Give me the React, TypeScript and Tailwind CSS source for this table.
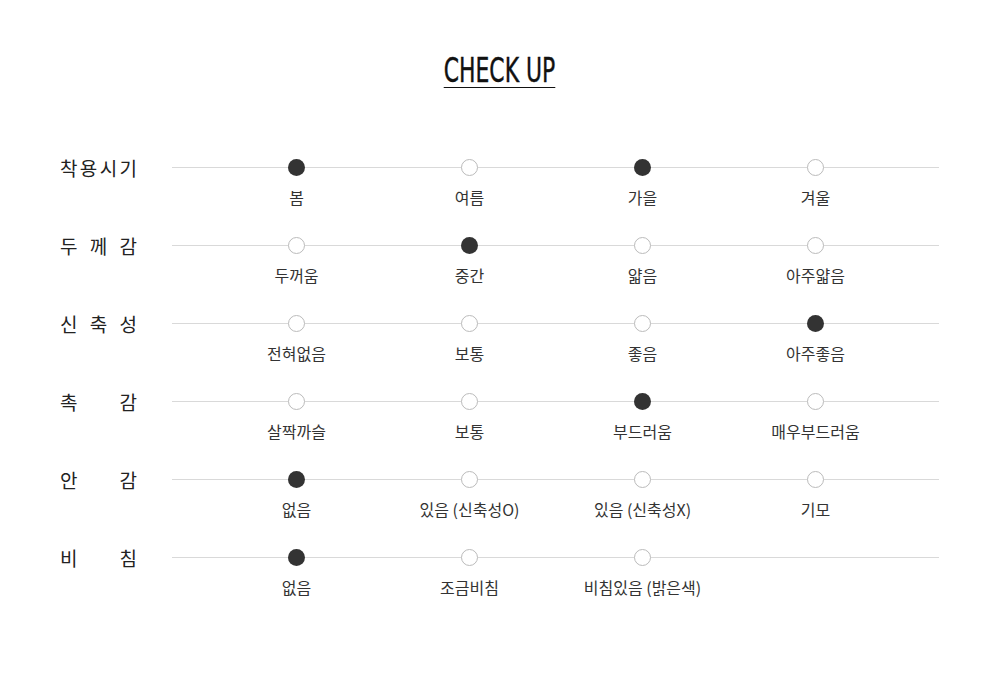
import React from "react";

type Row = { label: string[]; options: string[]; selected: number[] };

const rows: Row[] = [
  { label: ["착", "용", "시", "기"], options: ["봄", "여름", "가을", "겨울"], selected: [0, 2] },
  { label: ["두", "께", "감"], options: ["두꺼움", "중간", "얇음", "아주얇음"], selected: [1] },
  { label: ["신", "축", "성"], options: ["전혀없음", "보통", "좋음", "아주좋음"], selected: [3] },
  { label: ["촉", "감"], options: ["살짝까슬", "보통", "부드러움", "매우부드러움"], selected: [2] },
  { label: ["안", "감"], options: ["없음", "있음 (신축성O)", "있음 (신축성X)", "기모"], selected: [0] },
  { label: ["비", "침"], options: ["없음", "조금비침", "비침있음 (밝은색)"], selected: [0] },
];

export default function App() {
  return (
    <div
      className="w-[1000px] h-[685px] bg-white text-[#222]"
      style={{ fontFamily: '"Noto Sans CJK KR", "Noto Sans", sans-serif' }}
    >
      <div className="flex justify-center pt-[53px]">
        <h1
          className="text-[34px] leading-[34px] text-[#111] border-b-[1.5px] border-[#111] tracking-[0px] scale-x-[0.645] [-webkit-text-stroke:0.45px_#111]"
          style={{ fontFamily: '"DejaVu Sans", sans-serif' }}
        >
          CHECK UP
        </h1>
      </div>
      <div className="flex flex-col pt-[70px]">
        {rows.map((r, i) => (
          <div key={i} className="flex items-start h-[78px]">
            <div className="w-[172px] pl-[60px] pr-[35px] h-[20px] flex items-center">
              <div className="w-[77px] flex justify-between text-[19px] leading-[20px] text-[#222]">
                {r.label.map((c, j) => (
                  <span key={j}>{c}</span>
                ))}
              </div>
            </div>
            <div className="relative w-[767px]">
              <div className="absolute left-0 right-0 top-[9px] h-px bg-[#d9d9d9]" />
              <div className="relative flex pl-[38px]">
                {r.options.map((o, j) => (
                  <div key={j} className="w-[173px] flex flex-col items-center">
                    {r.selected.includes(j) ? (
                      <div className="w-[17px] h-[17px] rounded-full bg-[#333] mt-[1px]" />
                    ) : (
                      <div className="w-[17px] h-[17px] rounded-full bg-white border border-[#bbb] mt-[1px]" />
                    )}
                    <div className="mt-[10px] text-[16px] leading-[22px] text-[#333] whitespace-nowrap">{o}</div>
                  </div>
                ))}
              </div>
            </div>
          </div>
        ))}
      </div>
    </div>
  );
}
